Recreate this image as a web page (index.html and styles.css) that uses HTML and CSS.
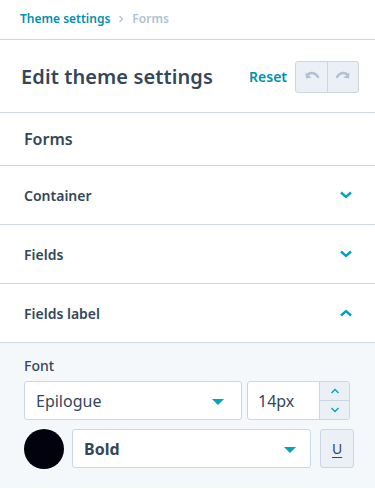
FILE: index.html
```html
<!DOCTYPE html>
<html>
<head>
<meta charset="utf-8">
<link rel="stylesheet" href="styles.css">
</head>
<body>
<div class="panel">
  <nav class="crumbs">
    <a class="crumb-link">Theme settings</a>
    <span class="crumb-sep">
      <svg width="8" height="8" viewBox="0 0 8 8"><path d="M2.5 1 L5.5 4 L2.5 7" fill="none" stroke="#b0c1d4" stroke-width="1.3"/></svg>
    </span>
    <span class="crumb-current">Forms</span>
  </nav>
  <header class="head">
    <h1 class="title">Edit theme settings</h1>
    <div class="head-actions">
      <span class="reset">Reset</span>
      <div class="undo-group">
        <button class="undo-btn">
          <svg width="16" height="12" viewBox="0 0 16 12"><path d="M3 4 C6 1 11 1 14 6" fill="none" stroke="#b0c1d4" stroke-width="2.4" stroke-linecap="round"/><path d="M1.5 1.5 L2 7.5 L7.5 6.5 Z" fill="#b0c1d4"/></svg>
        </button>
        <button class="undo-btn">
          <svg width="16" height="12" viewBox="0 0 16 12"><path d="M13 4 C10 1 5 1 2 6" fill="none" stroke="#b0c1d4" stroke-width="2.4" stroke-linecap="round"/><path d="M14.5 1.5 L14 7.5 L8.5 6.5 Z" fill="#b0c1d4"/></svg>
        </button>
      </div>
    </div>
  </header>
  <div class="section-title">Forms</div>
  <div class="acc-row">
    <span>Container</span>
    <svg class="chev" width="14" height="10" viewBox="0 0 14 10"><path d="M2 2.5 L7 7 L12 2.5" fill="none" stroke="#00a4bd" stroke-width="2.4"/></svg>
  </div>
  <div class="acc-row">
    <span>Fields</span>
    <svg class="chev" width="14" height="10" viewBox="0 0 14 10"><path d="M2 2.5 L7 7 L12 2.5" fill="none" stroke="#00a4bd" stroke-width="2.4"/></svg>
  </div>
  <div class="acc-row">
    <span>Fields label</span>
    <svg class="chev" width="14" height="10" viewBox="0 0 14 10"><path d="M2 7.5 L7 3 L12 7.5" fill="none" stroke="#00a4bd" stroke-width="2.4"/></svg>
  </div>
  <div class="body">
    <div class="label">Font</div>
    <div class="row1">
      <div class="select font-select">
        <span class="font-name">Epilogue</span>
        <span class="caret"></span>
      </div>
      <div class="size-input">
        <span class="size-val">14px</span>
        <div class="stepper">
          <div class="step">
            <svg width="10" height="6" viewBox="0 0 10 6"><path d="M1.5 5 L5 1.5 L8.5 5" fill="none" stroke="#00a4bd" stroke-width="1.4"/></svg>
          </div>
          <div class="step">
            <svg width="10" height="6" viewBox="0 0 10 6"><path d="M1.5 1 L5 4.5 L8.5 1" fill="none" stroke="#00a4bd" stroke-width="1.4"/></svg>
          </div>
        </div>
      </div>
    </div>
    <div class="row2">
      <div class="swatch"></div>
      <div class="select weight-select">
        <span class="weight-name">Bold</span>
        <span class="caret"></span>
      </div>
      <button class="u-btn"><span class="u">U</span></button>
    </div>
  </div>
</div>
</body>
</html>
```
FILE: styles.css
```css
* { box-sizing: border-box; }
html, body { margin: 0; padding: 0; background: #fff; }
body {
  font-family: "Noto Sans", "DejaVu Sans", sans-serif;
  color: #33475b;
  width: 375px;
  height: 489px;
  overflow: hidden;
}
.panel { display: flex; flex-direction: column; }
.crumbs {
  height: 40px;
  border-bottom: 1px solid #cbd6e2;
  display: flex;
  align-items: center;
  padding: 0 20px 2px;
  font-size: 12px;
  font-weight: 600;
  gap: 5px;
}
.crumb-link { color: #0091ae; }
.crumb-sep { display: flex; align-items: center; padding: 0 2px; }
.crumb-current { color: #b0c1d4; }
.head {
  height: 73px;
  border-bottom: 1px solid #cbd6e2;
  display: flex;
  align-items: center;
  justify-content: space-between;
  padding: 0 16px 0 21px;
}
.title {
  margin: 0;
  font-size: 20px;
  font-weight: 600;
  color: #33475b;
  letter-spacing: 0.1px;
}
.head-actions { display: flex; align-items: center; gap: 8px; }
.reset { color: #0091ae; font-size: 14px; font-weight: 600; }
.undo-group {
  display: flex;
  border: 1px solid #cbd6e2;
  border-radius: 3px;
  background: #eaf0f6;
  height: 32px;
  margin-top: 1px;
}
.undo-btn {
  width: 31px;
  border: 0;
  background: transparent;
  padding: 0;
  display: flex;
  align-items: center;
  justify-content: center;
}
.undo-btn + .undo-btn { border-left: 1px solid #cbd6e2; }
.section-title {
  height: 53px;
  border-bottom: 1px solid #cbd6e2;
  display: flex;
  align-items: center;
  padding: 0 24px;
  font-size: 16px;
  font-weight: 600;
}
.acc-row {
  height: 59px;
  border-bottom: 1px solid #cbd6e2;
  display: flex;
  align-items: center;
  justify-content: space-between;
  padding: 0 22px 0 24px;
  font-size: 14px;
  font-weight: 600;
}
.chev { display: block; }
.body {
  background: #f5f8fa;
  padding: 13px 21px 20px 24px;
  flex: 1;
  height: 147px;
}
.label { font-size: 14px; font-weight: 500; margin-bottom: 6px; line-height: 19px; }
.row1 { display: flex; gap: 5px; height: 39px; }
.select {
  background: #fff;
  border: 1px solid #cbd6e2;
  border-radius: 3px;
  display: flex;
  align-items: center;
  justify-content: space-between;
}
.font-select { width: 218px; padding: 0 17px 0 11px; }
.font-name { font-size: 16px; font-weight: 400; color: #33475b; }
.caret {
  width: 0; height: 0;
  border-left: 6px solid transparent;
  border-right: 6px solid transparent;
  border-top: 6px solid #00a4bd;
  margin-top: 2px;
}
.size-input {
  width: 103px;
  background: #fff;
  border: 1px solid #cbd6e2;
  border-radius: 3px;
  display: flex;
}
.size-val { flex: 1; display: flex; align-items: center; padding-left: 10px; font-size: 16px; }
.stepper {
  width: 30px;
  background: #eaf0f6;
  border-left: 1px solid #cbd6e2;
  display: flex;
  flex-direction: column;
  border-radius: 0 2px 2px 0;
}
.step { flex: 1; display: flex; align-items: center; justify-content: center; }
.step + .step { border-top: 1px solid #cbd6e2; }
.row2 { display: flex; align-items: center; margin-top: 9px; height: 39px; }
.swatch {
  width: 40px; height: 40px;
  border-radius: 50%;
  background: #02020f;
  flex: none;
}
.weight-select { width: 240px; height: 39px; margin-left: 8px; padding: 0 14px 0 11px; }
.weight-name { font-size: 16px; font-weight: 700; }
.u-btn {
  width: 34px; height: 39px;
  margin-left: 9px;
  background: #eaf0f6;
  border: 1px solid #cbd6e2;
  border-radius: 3px;
  padding: 0;
  display: flex;
  align-items: center;
  justify-content: center;
  font-family: "Noto Sans", sans-serif;
  font-size: 14px;
  color: #33475b;
}
.u { text-decoration: underline; text-underline-offset: 3px; }
```
